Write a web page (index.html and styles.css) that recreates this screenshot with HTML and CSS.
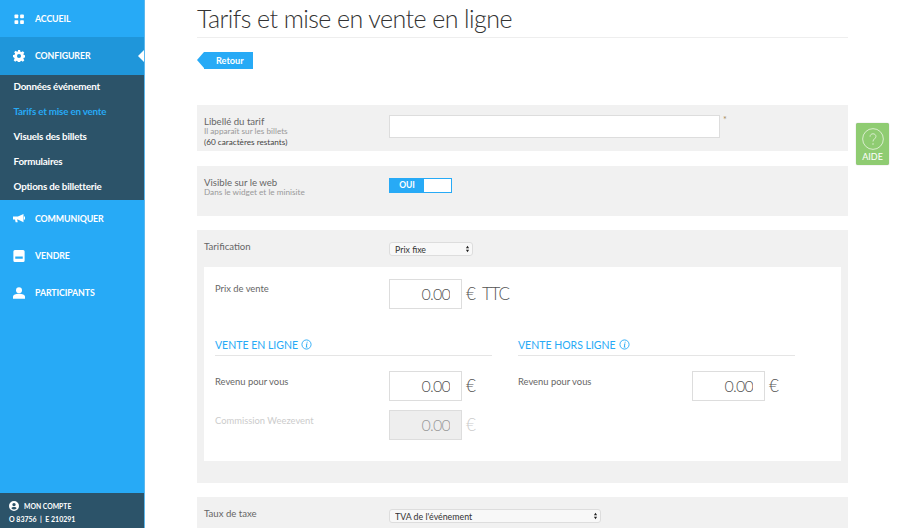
FILE: index.html
```html
<!DOCTYPE html>
<html lang="fr">
<head>
    <meta charset="UTF-8">
    <meta name="viewport" content="width=device-width, initial-scale=1.0">
    <title>Tarifs et mise en vente en ligne</title>
    <link rel="stylesheet" href="styles.css">
</head>
<body>
    <div class="sidebar">
        <a class="nav-item">
            <svg class="nav-icon" viewBox="0 0 16 16"><rect x="2" y="2" width="5" height="5" rx="1"/><rect x="9.500" y="2" width="5" height="5" rx="1"/><rect x="2" y="9.500" width="5" height="5" rx="1"/><rect x="9.500" y="9.500" width="5" height="5" rx="1"/></svg>
            ACCUEIL
        </a>
        <a class="nav-item nav-item-active">
            <svg class="nav-icon" viewBox="0 0 16 16"><path fill-rule="evenodd" d="M6.600 0h2.800l.4 2.200 1.400.6 1.900-1.300 2 2-1.300 1.900.6 1.400 2.200.4v2.800l-2.200.4-.6 1.400 1.300 1.900-2 2-1.900-1.300-1.400.6-.4 2.200H6.600l-.4-2.200-1.400-.6-1.900 1.300-2-2 1.300-1.900-.6-1.400L0 9.400V6.600l2.200-.4.6-1.400-1.300-1.900 2-2 1.900 1.300 1.400-.6zM8 5.300a2.700 2.700 0 1 0 0 5.400 2.700 2.700 0 0 0 0-5.400z"/></svg>
            CONFIGURER
        </a>
        <div class="subnav">
            <a class="subnav-item">Données événement</a>
            <a class="subnav-item subnav-item-active">Tarifs et mise en vente</a>
            <a class="subnav-item">Visuels des billets</a>
            <a class="subnav-item">Formulaires</a>
            <a class="subnav-item">Options de billetterie</a>
        </div>
        <a class="nav-item">
            <svg class="nav-icon" viewBox="0 0 16 16"><path d="M0 6h6.500L14 2.500v11L6.500 10H5.500l.8 3.500H3.500L2.700 10H0z"/><rect x="14.500" y="6" width="1.500" height="4"/></svg>
            COMMUNIQUER
        </a>
        <a class="nav-item">
            <svg class="nav-icon" viewBox="0 0 16 16"><path fill-rule="evenodd" d="M2.500 0h11A2 2 0 0 1 15.500 2v12a2 2 0 0 1-2 2h-11a2 2 0 0 1-2-2V2a2 2 0 0 1 2-2zM3 8.500v3.300h10V8.500z"/></svg>
            VENDRE
        </a>
        <a class="nav-item">
            <svg class="nav-icon" viewBox="0 0 16 16"><circle cx="8" cy="4.200" r="4"/><path d="M0 15.500v-2.500C0 10.500 3.500 9 8 9s8 1.500 8 4v2.500z"/></svg>
            PARTICIPANTS
        </a>
        <div class="account">
            <div class="account-title">
                <svg class="account-icon" viewBox="0 0 16 16"><path fill-rule="evenodd" d="M8 0a8 8 0 1 1 0 16A8 8 0 0 1 8 0zm0 3a2.700 2.700 0 1 0 0 5.400A2.700 2.700 0 0 0 8 3zm0 6.400c-2 0-4 .8-4.200 2a5.400 5.400 0 0 0 8.400 0c-.2-1.200-2.200-2-4.200-2z"/></svg>
                MON COMPTE
            </div>
            <div class="account-ids">O 83756 &nbsp;|&nbsp; E 210291</div>
        </div>
    </div>

    <div class="main">
        <h1 class="page-title">Tarifs et mise en vente en ligne</h1>
        <a class="btn-back">Retour</a>

        <div class="panel panel-name">
            <div class="form-row">
                <div class="label-col">
                    <div class="label">Libellé du tarif</div>
                    <div class="hint">Il apparaît sur les billets</div>
                    <div class="hint hint-dark">(60 caractères restants)</div>
                </div>
                <input class="text-input" type="text">
                <span class="required">*</span>
            </div>
        </div>

        <div class="panel panel-web">
            <div class="form-row">
                <div class="label-col">
                    <div class="label">Visible sur le web</div>
                    <div class="hint">Dans le widget et le minisite</div>
                </div>
                <div class="toggle">
                    <span class="toggle-on">OUI</span>
                    <span class="toggle-off"></span>
                </div>
            </div>
        </div>

        <div class="panel panel-price">
            <div class="form-row">
                <div class="label-col label">Tarification</div>
                <div class="select-wrap select-short">
                    <select class="select"><option>Prix fixe</option></select>
                    <svg class="select-arrows" viewBox="0 0 6 10"><path d="M3 1l2 3H1zM3 9L1 6h4z"/></svg>
                </div>
            </div>
            <div class="price-box">
                <div class="price-row">
                    <div class="price-label">Prix de vente</div>
                    <input class="price-input" type="text" value="0.00">
                    <span class="unit">€</span>
                    <span class="unit unit-ttc">TTC</span>
                </div>
                <div class="sales-grid">
                    <div class="sales-col">
                        <h3 class="sales-title">VENTE EN LIGNE
                            <svg class="info-icon" viewBox="0 0 12 12"><circle cx="6" cy="6" r="5" fill="none" stroke="currentColor"/><path d="M6.400 3h1L7 4H6zM5.800 5h1.200L6.400 8.500H7.200L7 9.200H5.200L5.800 5.700H5.200z" fill="currentColor"/></svg>
                        </h3>
                        <div class="price-row">
                            <div class="price-label">Revenu pour vous</div>
                            <input class="price-input" type="text" value="0.00">
                            <span class="unit">€</span>
                        </div>
                        <div class="price-row price-row-disabled">
                            <div class="price-label">Commission Weezevent</div>
                            <input class="price-input" type="text" value="0.00" disabled>
                            <span class="unit">€</span>
                        </div>
                    </div>
                    <div class="sales-col">
                        <h3 class="sales-title">VENTE HORS LIGNE
                            <svg class="info-icon" viewBox="0 0 12 12"><circle cx="6" cy="6" r="5" fill="none" stroke="currentColor"/><path d="M6.400 3h1L7 4H6zM5.800 5h1.200L6.400 8.500H7.200L7 9.200H5.200L5.800 5.700H5.200z" fill="currentColor"/></svg>
                        </h3>
                        <div class="price-row">
                            <div class="price-label">Revenu pour vous</div>
                            <input class="price-input" type="text" value="0.00">
                            <span class="unit">€</span>
                        </div>
                    </div>
                </div>
            </div>
        </div>

        <div class="panel panel-tax">
            <div class="form-row">
                <div class="label-col label">Taux de taxe</div>
                <div class="select-wrap select-long">
                    <select class="select"><option>TVA de l'événement</option></select>
                    <svg class="select-arrows" viewBox="0 0 6 10"><path d="M3 1l2 3H1zM3 9L1 6h4z"/></svg>
                </div>
            </div>
        </div>
    </div>

    <a class="help">
        <svg class="help-icon" viewBox="0 0 24 24"><circle cx="12" cy="12" r="11.300" fill="none" stroke="currentColor"/><path d="M8.800 9.500C8.800 7.500 10.200 6.300 12 6.300s3.200 1.200 3.200 2.900c0 2.600-3.200 2.800-3.200 5.500" fill="none" stroke="currentColor"/><circle cx="12" cy="17.500" r=".8" fill="currentColor"/></svg>
        AIDE
    </a>
</body>
</html>
```

FILE: styles.css
```css
* {
    margin: 0;
    padding: 0;
    box-sizing: border-box;
}

html, body {
    height: 100%;
    overflow: hidden;
}

body {
    display: flex;
    font-family: 'Lato', 'Open Sans', sans-serif;
    background: white;
    color: #666;
}

/* menu de gauche */
.sidebar {
    width: 145px;
    flex-shrink: 0;
    height: 528px;
    display: flex;
    flex-direction: column;
    background: #27aaf6;
    border-right: 1px solid #5cb8ee;
}

.nav-item {
    position: relative;
    height: 37.300px;
    display: flex;
    align-items: center;
    padding-left: 13px;
    gap: 10px;
    color: white;
    font-size: 8.800px;
    font-weight: 700;
    letter-spacing: -0.1px;
}

.nav-item-active {
    background: #1f96da;
}

.nav-item-active::after {
    content: '';
    position: absolute;
    right: 0;
    top: 13px;
    border: 6px solid transparent;
    border-right-color: white;
    border-left-width: 0;
}

.nav-icon {
    width: 12px;
    height: 12px;
    fill: white;
}

.subnav {
    background: #2c5369;
    height: 125px;
}

.subnav-item {
    display: block;
    height: 25px;
    line-height: 23px;
    padding-left: 13.500px;
    color: white;
    font-size: 9.800px;
    font-weight: 700;
    letter-spacing: -0.2px;
}

.subnav-item-active {
    color: #27aaf6;
}

.account {
    margin-top: auto;
    height: 35px;
    background: #2c5369;
    color: white;
    padding: 7px 0 0 9px;
    font-weight: 700;
}

.account-title {
    display: flex;
    align-items: center;
    gap: 5px;
    font-size: 6.800px;
    height: 12px;
}

.account-icon {
    width: 10px;
    height: 10px;
    fill: white;
}

.account-ids {
    margin-top: 3px;
    font-size: 7px;
}

/* contenu */
.main {
    flex: 1;
    padding: 0 52px 0 52px;
    min-width: 0;
}

.page-title {
    font-size: 25px;
    font-weight: 300;
    letter-spacing: -0.560px;
    color: #333;
    height: 38px;
    line-height: 37px;
    border-bottom: 1px solid #eee;
    margin-bottom: 14px;
}

.btn-back {
    position: relative;
    display: block;
    width: 49px;
    height: 17px;
    margin-left: 7px;
    margin-bottom: 36px;
    padding-left: 12px;
    line-height: 17px;
    background: #27aaf6;
    color: white;
    font-size: 9.200px;
    font-weight: 700;
}

.btn-back::before {
    content: '';
    position: absolute;
    left: -7px;
    top: 0;
    border: 8.500px solid transparent;
    border-right-color: #27aaf6;
    border-left-width: 0;
    border-right-width: 7px;
}

.panel {
    background: #f1f1f1;
    padding: 10px 7px;
    margin-bottom: 15px;
}

.panel-name { height: 46px; }
.panel-web { height: 50px; margin-bottom: 14px; }
.panel-price { height: 253px; margin-bottom: 14px; }
.panel-tax { height: 31px; margin-bottom: 0; }

.form-row {
    display: flex;
    align-items: flex-start;
}

.label-col {
    width: 185px;
    flex-shrink: 0;
}

.label {
    padding-top: 1px;
    font-size: 9.600px;
    line-height: 12px;
    color: #666;
}

.hint {
    font-size: 8.200px;
    line-height: 11px;
    color: #999;
    margin-top: -2px;
}

.hint-dark {
    margin-top: 0;
    color: #444;
}

.text-input {
    width: 331px;
    height: 23px;
    border: 1px solid #ddd;
    background: white;
}

.required {
    margin-left: 3px;
    font-size: 9px;
    line-height: 9px;
    color: #a68a5b;
}

.toggle {
    display: flex;
    width: 63px;
    height: 15px;
    margin-top: 2px;
    border: 1px solid #27aaf6;
    background: white;
}

.toggle-on {
    width: 34px;
    background: #27aaf6;
    color: white;
    font-size: 8.500px;
    font-weight: 700;
    line-height: 13px;
    text-align: center;
}

.select-wrap {
    position: relative;
    margin-top: 2px;
}

.select-short { width: 84px; }
.select-long { width: 212px; }

.select {
    appearance: none;
    display: block;
    width: 100%;
    height: 14px;
    padding-left: 5px;
    border: 1px solid #ddd;
    border-radius: 3px;
    background: #f8f8f8;
    font-family: inherit;
    font-size: 8.800px;
    color: #333;
}

.select-arrows {
    position: absolute;
    right: 3px;
    top: 3px;
    width: 5px;
    height: 8px;
    fill: #222;
}

.price-box {
    margin-top: 11px;
    height: 194px;
    background: white;
    padding: 12px 11px 0 11px;
}

.price-row {
    display: flex;
    align-items: flex-start;
}

.price-label {
    width: 174px;
    flex-shrink: 0;
    padding-top: 4px;
    font-size: 9.400px;
    line-height: 12px;
    color: #666;
}

.sales-col .price-label {
    padding-top: 5px;
}

.price-input {
    width: 73px;
    height: 30px;
    padding-right: 11px;
    padding-bottom: 2px;
    border: 1px solid #ddd;
    background: white;
    font-family: inherit;
    font-size: 16px;
    font-weight: 300;
    letter-spacing: -0.8px;
    color: #555;
    text-align: right;
}

.unit {
    margin-left: 4px;
    font-size: 17px;
    font-weight: 300;
    line-height: 30px;
    color: #555;
}

.unit-ttc {
    margin-left: 6px;
    letter-spacing: -1.200px;
}

.price-row-disabled {
    margin-top: 9px;
}

.price-row-disabled .price-label {
    color: #ccc;
}

.price-row-disabled .price-input {
    background: #eee;
    color: #999;
}

.price-row-disabled .unit {
    color: #ccc;
}

.sales-grid {
    display: grid;
    grid-template-columns: 277px 277px;
    gap: 26px;
    margin-top: 23px;
}

.sales-title {
    display: flex;
    align-items: center;
    gap: 3px;
    height: 24px;
    padding-top: 2px;
    margin-bottom: 15px;
    border-bottom: 1px solid #e5e5e5;
    color: #27aaf6;
    font-size: 10.500px;
    font-weight: 400;
}

.info-icon {
    width: 11px;
    height: 11px;
}

/* bouton aide */
.help {
    position: absolute;
    left: 856px;
    top: 123px;
    width: 33px;
    height: 42px;
    padding-top: 5px;
    background: #8fcc72;
    border-radius: 2px;
    box-shadow: 0 0 1px #999;
    color: white;
    font-size: 9px;
    line-height: 11px;
    text-align: center;
}

.help-icon {
    display: block;
    width: 22px;
    height: 22px;
    margin: 0 auto 1px;
    color: #dff0d5;
}
```
